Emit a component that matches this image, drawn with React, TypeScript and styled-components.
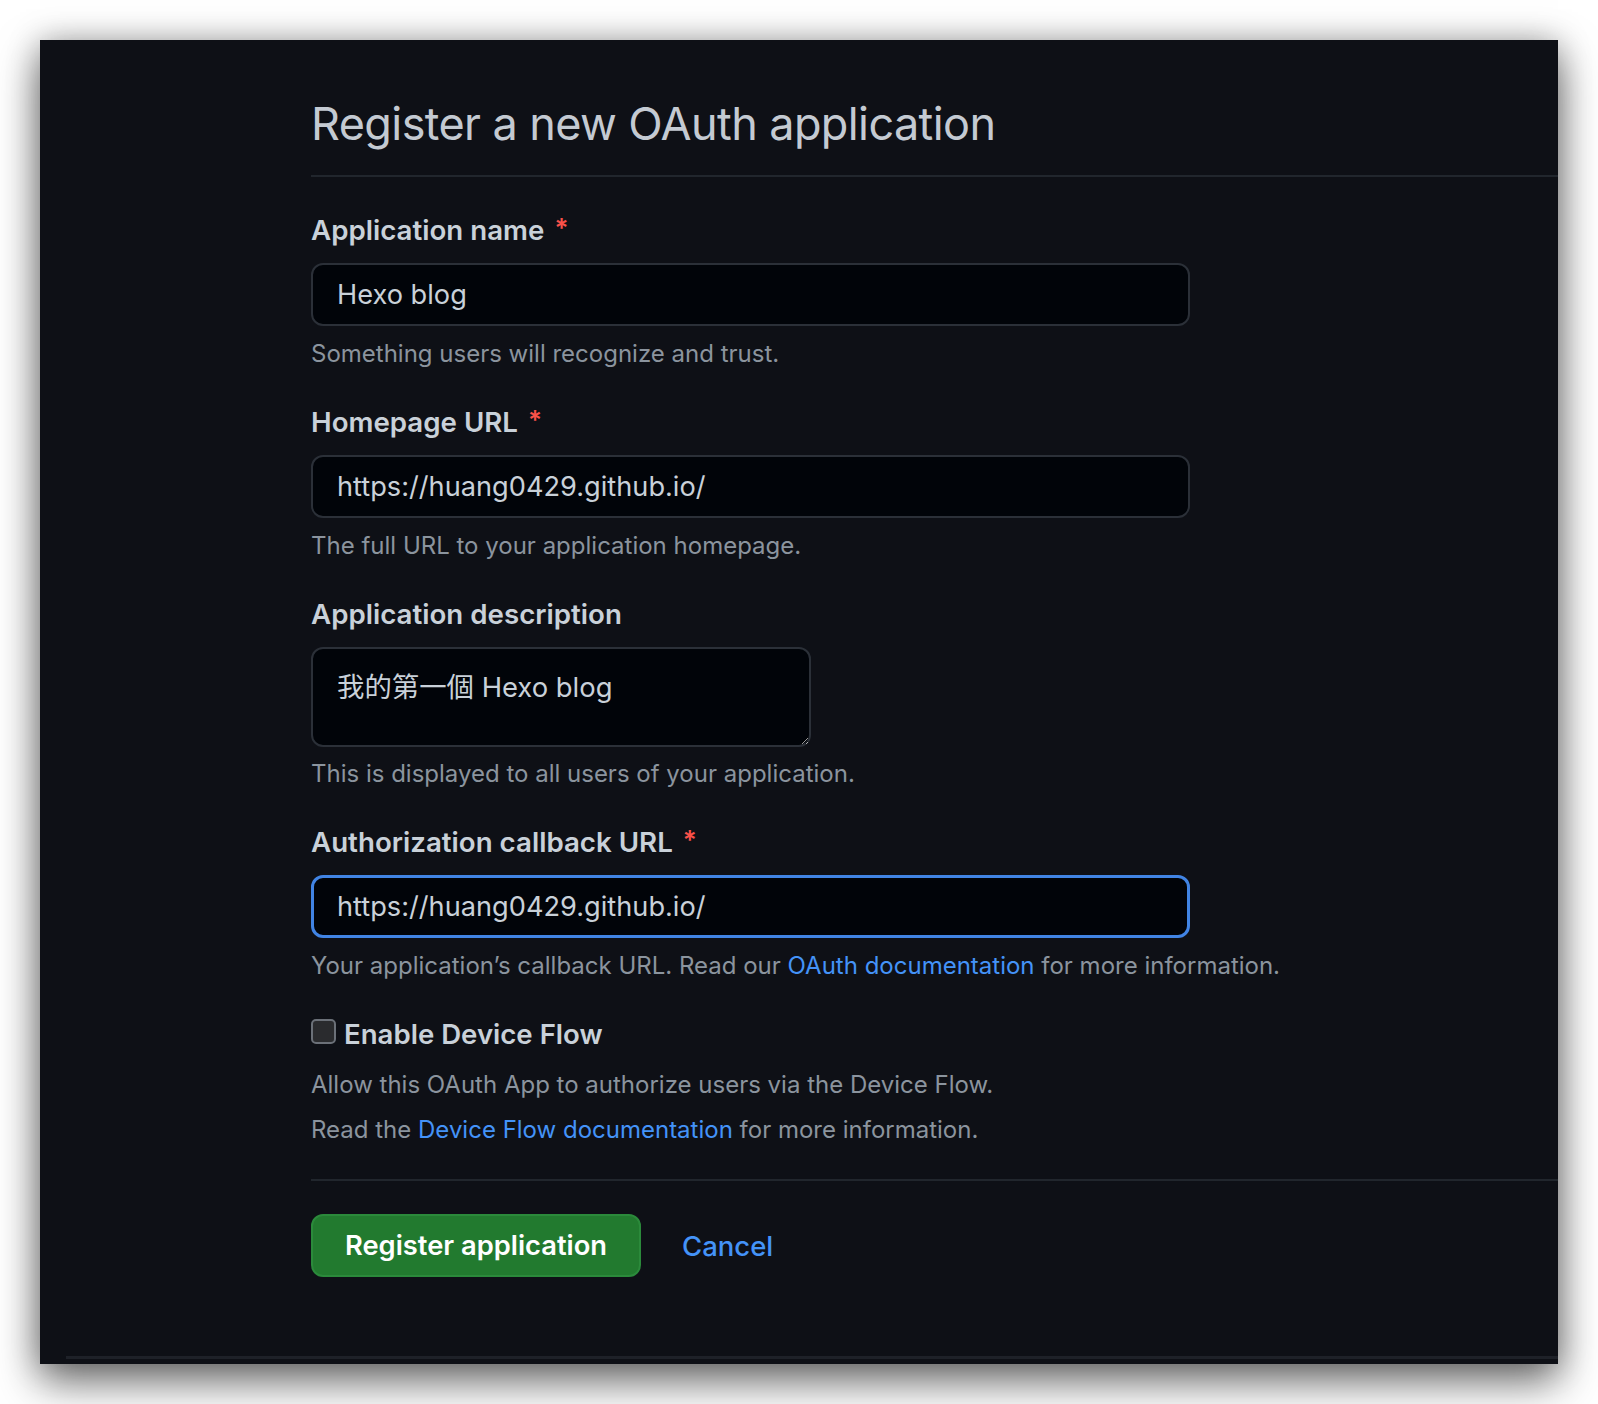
import React from "react";
import styled, { createGlobalStyle } from "styled-components";

const GlobalStyle = createGlobalStyle`
  html, body {
    margin: 0;
    padding: 0;
    background: #ffffff;
  }
  body {
    font-family: Inter, "Noto Sans", "Noto Sans CJK TC", sans-serif;
  }
  * { box-sizing: border-box; }
`;

const Page = styled.div`
  width: 1598px;
  height: 1404px;
  padding: 40px 40px 40px 40px;
`;

const Window = styled.div`
  width: 1518px;
  height: 1324px;
  background: #0e1016;
  box-shadow: 0 18px 40px rgba(0, 0, 0, 0.55), 0 0 30px rgba(0, 0, 0, 0.25);
  display: flex;
  flex-direction: column;
  padding-top: 54px;
`;

const Main = styled.div`
  padding-left: 271px;
  flex: 1;
`;

const Header = styled.div`
  border-bottom: 2px solid #21262d;
  padding-bottom: 21px;
  margin-bottom: 35px;
`;

const Title = styled.h1`
  margin: 0;
  font-size: 45px;
  line-height: 60px;
  font-weight: 400;
  color: #c4cad2;
  letter-spacing: -0.6px;
`;

const Field = styled.div`
  margin-bottom: 35px;
`;

const Label = styled.div`
  font-size: 27.7px;
  line-height: 36px;
  font-weight: 600;
  color: #c9d1d9;
  margin-bottom: 15px;
  display: flex;
  align-items: center;
`;

const Required = styled.span`
  color: #f85149;
  margin-left: 10px;
  font-size: 26px;
  position: relative;
  top: -2px;
`;

const Input = styled.div<{ $focused?: boolean }>`
  width: 879px;
  height: 63px;
  background: #010409;
  border: ${(p) => (p.$focused ? "3px solid #4184e4" : "2px solid #2b3038")};
  border-radius: 12px;
  display: flex;
  align-items: center;
  padding-left: ${(p) => (p.$focused ? "23px" : "24px")};
  font-size: 27.2px;
  color: #c9d1d9;
`;

const TextArea = styled.textarea`
  display: block;
  width: 500px;
  height: 100px;
  background: #010409;
  border: 2px solid #2b3038;
  border-radius: 12px;
  padding: 20px 24px 10px;
  font-family: Inter, "Noto Sans CJK TC", sans-serif;
  font-size: 27.4px;
  line-height: 36px;
  color: #c9d1d9;
  outline: none;
  resize: vertical;
  margin: 0;
`;

const Note = styled.p<{ $gap?: number }>`
  margin: ${(p) => p.$gap ?? 13}px 0 0 0;
  font-size: 24px;
  line-height: 30px;
  color: #8b949e;
`;

const Link = styled.a`
  color: #4493f8;
  text-decoration: none;
`;

const CheckRow = styled.label`
  display: flex;
  align-items: center;
  gap: 8px;
  height: 36px;
  margin-top: 1px;
  font-size: 27.6px;
  font-weight: 600;
  color: #c9d1d9;
`;

const CheckBox = styled.span`
  width: 25px;
  height: 25px;
  border-radius: 5px;
  background: #2a2b2e;
  border: 2px solid #6b7078;
  margin-top: -6px;
  flex-shrink: 0;
`;

const Divider = styled.div`
  border-top: 2px solid #21262d;
  margin-top: 34px;
`;

const Actions = styled.div`
  display: flex;
  align-items: center;
  gap: 41px;
  margin-top: 33px;
`;

const PrimaryButton = styled.button`
  height: 63px;
  padding: 0 32px;
  background: #227a2f;
  border: 2px solid #2b8a3b;
  border-radius: 12px;
  color: #ffffff;
  font-family: Inter, sans-serif;
  font-size: 27.3px;
  font-weight: 600;
`;

const CancelLink = styled.a`
  color: #4493f8;
  font-size: 27.5px;
  font-weight: 500;
  text-decoration: none;
`;

const FooterLine = styled.div`
  margin-left: 26px;
  border-top: 3px solid #1e2128;
  margin-bottom: 5px;
`;

export default function App() {
  return (
    <>
      <GlobalStyle />
      <Page>
        <Window>
          <Main>
            <Header>
              <Title>Register a new OAuth application</Title>
            </Header>

            <Field>
              <Label>
                Application name<Required>*</Required>
              </Label>
              <Input>Hexo blog</Input>
              <Note>Something users will recognize and trust.</Note>
            </Field>

            <Field>
              <Label>
                Homepage URL<Required>*</Required>
              </Label>
              <Input>https://huang0429.github.io/</Input>
              <Note>The full URL to your application homepage.</Note>
            </Field>

            <Field>
              <Label>Application description</Label>
              <TextArea defaultValue="我的第一個 Hexo blog" />
              <Note $gap={12}>This is displayed to all users of your application.</Note>
            </Field>

            <Field>
              <Label>
                Authorization callback URL<Required>*</Required>
              </Label>
              <Input $focused>https://huang0429.github.io/</Input>
              <Note>
                Your application’s callback URL. Read our{" "}
                <Link>OAuth documentation</Link> for more information.
              </Note>
            </Field>

            <CheckRow>
              <CheckBox />
              Enable Device Flow
            </CheckRow>
            <Note $gap={18}>Allow this OAuth App to authorize users via the Device Flow.</Note>
            <Note $gap={15}>
              Read the <Link>Device Flow documentation</Link> for more information.
            </Note>

            <Divider />

            <Actions>
              <PrimaryButton>Register application</PrimaryButton>
              <CancelLink>Cancel</CancelLink>
            </Actions>
          </Main>
          <FooterLine />
        </Window>
      </Page>
    </>
  );
}
